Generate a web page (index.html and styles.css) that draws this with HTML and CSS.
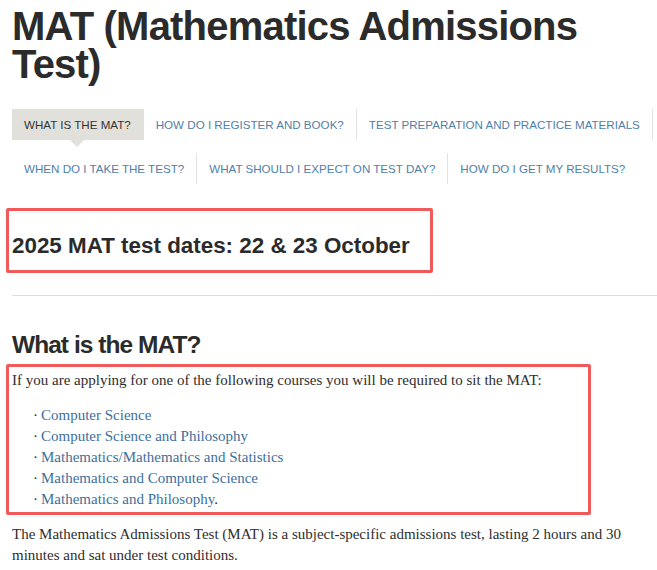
FILE: index.html
```html
<!DOCTYPE html>
<html lang="en">
<head>
<meta charset="utf-8">
<title>MAT (Mathematics Admissions Test)</title>
<link rel="stylesheet" href="styles.css">
</head>
<body>
<div class="page">
  <h1 class="title">MAT (Mathematics Admissions Test)</h1>

  <nav class="tabs">
    <div class="tab-row">
      <a class="tab active" href="#">What is the MAT?</a>
      <a class="tab sep" href="#">How do I register and book?</a>
      <a class="tab sep" href="#">Test preparation and practice materials</a>
    </div>
    <div class="tab-row">
      <a class="tab sep" href="#">When do I take the test?</a>
      <a class="tab sep" href="#">What should I expect on test day?</a>
      <a class="tab" href="#">How do I get my results?</a>
    </div>
  </nav>

  <div class="mark mark-dates">
    <h2 class="dates">2025 MAT test dates: 22 &amp; 23 October</h2>
  </div>

  <hr class="rule">

  <h2 class="section">What is the MAT?</h2>

  <div class="mark mark-courses">
    <p class="text">If you are applying for one of the following courses you will be required to sit the MAT:</p>
    <ul class="courses">
      <li><a href="#">Computer Science</a></li>
      <li><a href="#">Computer Science and Philosophy</a></li>
      <li><a href="#">Mathematics/Mathematics and Statistics</a></li>
      <li><a href="#">Mathematics and Computer Science</a></li>
      <li><a href="#">Mathematics and Philosophy</a>.</li>
    </ul>
  </div>

  <p class="text after">The Mathematics Admissions Test (MAT) is a subject-specific admissions test, lasting 2 hours and 30 minutes and sat under test conditions.</p>
</div>
</body>
</html>
```

FILE: styles.css
```css
html, body {
  margin: 0;
  padding: 0;
  background: #ffffff;
}

.page {
  padding: 0 0 0 12px;
  color: #333333;
}

.title {
  margin: 7px 0 0;
  font-family: "Liberation Sans", Arial, sans-serif;
  font-weight: bold;
  font-size: 40px;
  line-height: 38px;
  letter-spacing: -0.8px;
  color: #2b2b2b;
}

.tabs {
  margin-top: 26px;
  display: flex;
  flex-direction: column;
  gap: 13px;
}

.tab-row {
  display: flex;
}

.tab {
  position: relative;
  display: block;
  height: 31px;
  line-height: 32px;
  padding: 0 12px;
  font-family: "Liberation Sans", Arial, sans-serif;
  font-size: 11.6px;
  text-transform: uppercase;
  text-decoration: none;
  color: #4f80a9;
  border-right: 1px solid #e2e2e2;
}

.tab.active {
  background: #e2e0db;
  color: #333333;
  border-right-color: transparent;
}

.tab.active::after {
  content: "";
  position: absolute;
  left: 50%;
  top: 100%;
  margin-left: -7px;
  border-left: 7px solid transparent;
  border-right: 7px solid transparent;
  border-top: 7px solid #e2e0db;
}

.tab-row:last-child .tab:last-child {
  border-right: none;
}

.mark {
  border: 3px solid #f05a5a;
  border-radius: 2px;
  margin-left: -6px;
  padding-left: 3px;
}

.mark-dates {
  margin-top: 24px;
  width: 418px;
  padding-top: 22px;
  padding-bottom: 11px;
}

.dates {
  margin: 0;
  font-family: "Liberation Sans", Arial, sans-serif;
  font-weight: bold;
  font-size: 22.4px;
  line-height: 26px;
  color: #2b2b2b;
}

.rule {
  margin: 22px 0 0;
  border: none;
  border-top: 1px solid #dddddd;
  height: 0;
}

.section {
  margin: 35px 0 0;
  font-family: "Liberation Sans", Arial, sans-serif;
  font-weight: bold;
  font-size: 24.5px;
  line-height: 28px;
  letter-spacing: -0.95px;
  color: #2b2b2b;
}

.mark-courses {
  margin-top: 5px;
  width: 576px;
  padding-top: 3px;
  padding-bottom: 2px;
}

.text {
  margin: 0;
  font-family: "Liberation Serif", Georgia, serif;
  font-size: 15px;
  line-height: 21px;
  color: #2e2e2e;
}

.courses {
  list-style: none;
  margin: 14px 0 0;
  padding: 0 0 0 21px;
  font-family: "Liberation Serif", Georgia, serif;
  font-size: 15px;
  line-height: 21px;
  color: #2e2e2e;
}

.courses li::before {
  content: "\00B7";
  display: inline-block;
  width: 8px;
}

.courses a {
  color: #3d6f9c;
  text-decoration: none;
}

.after {
  margin-top: 9px;
  padding-right: 16px;
}
```
